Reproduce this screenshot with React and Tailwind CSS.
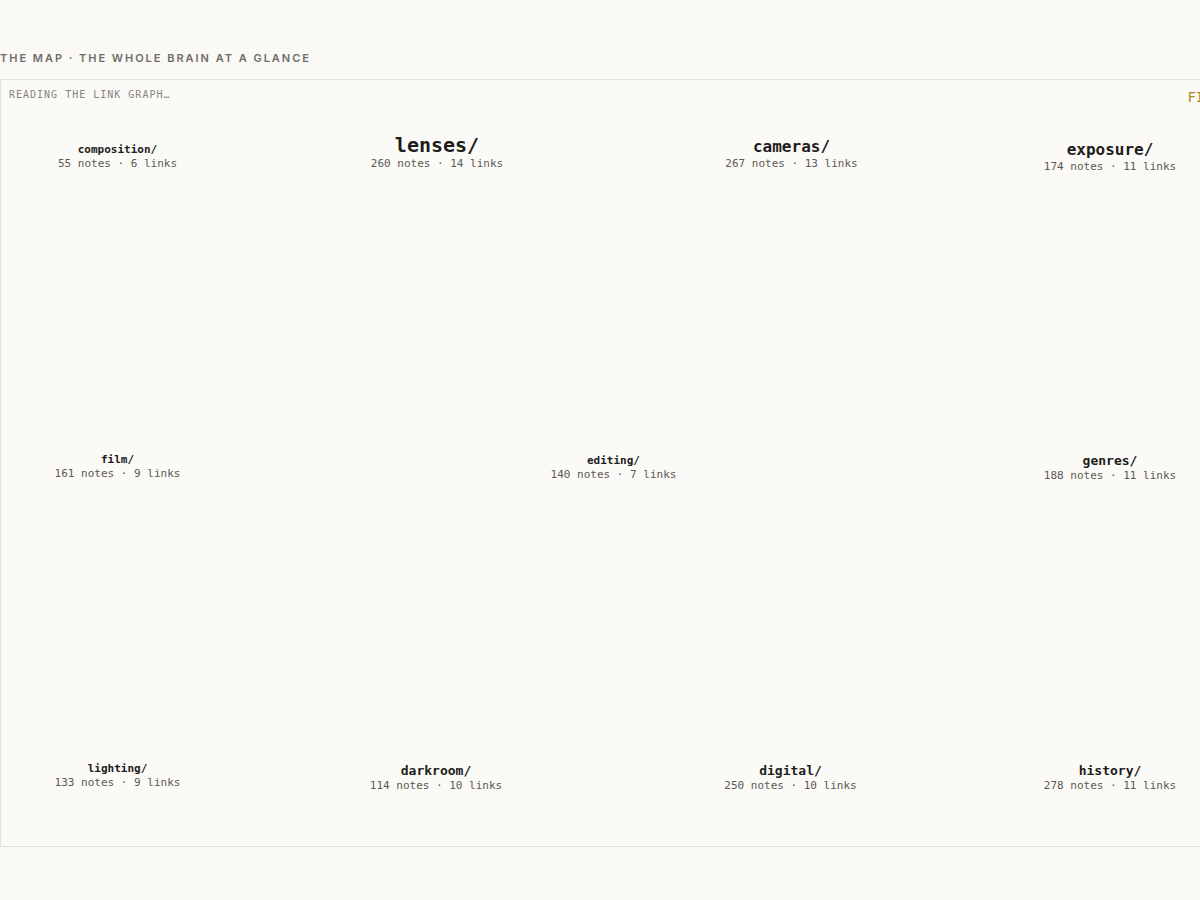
import React from "react";

const nodes = [
  { name: "composition/", meta: "55 notes · 6 links", cx: 117.5, bottom: 171, size: 11 },
  { name: "lenses/", meta: "260 notes · 14 links", cx: 437, bottom: 171, size: 20 },
  { name: "cameras/", meta: "267 notes · 13 links", cx: 791.5, bottom: 171, size: 16 },
  { name: "exposure/", meta: "174 notes · 11 links", cx: 1110, bottom: 174, size: 16 },
  { name: "film/", meta: "161 notes · 9 links", cx: 117.5, bottom: 481, size: 11 },
  { name: "editing/", meta: "140 notes · 7 links", cx: 613.5, bottom: 482, size: 11 },
  { name: "genres/", meta: "188 notes · 11 links", cx: 1110, bottom: 483, size: 13 },
  { name: "lighting/", meta: "133 notes · 9 links", cx: 117.5, bottom: 790, size: 11 },
  { name: "darkroom/", meta: "114 notes · 10 links", cx: 436, bottom: 793, size: 13 },
  { name: "digital/", meta: "250 notes · 10 links", cx: 790.5, bottom: 793, size: 13 },
  { name: "history/", meta: "278 notes · 11 links", cx: 1110, bottom: 793, size: 13 },
];

export default function App() {
  return (
    <div className="w-[1200px] h-[900px] overflow-hidden bg-[#faf9f5] pt-[50px]">
      <div className="h-4 text-[11px] leading-4 font-semibold tracking-[0.18em] text-[#6e6d68] uppercase font-['Inter','Noto_Sans',sans-serif]">
        The Map · The whole brain at a glance
      </div>
      <div className="relative mt-[13px] w-[1260px] h-[768px] border border-[#e4e2db] bg-[#fbfaf7] font-['DejaVu_Sans_Mono','Liberation_Mono',monospace]">
        <div className="flex items-start pl-2 pt-2 pr-[21px]">
          <div className="flex-1 text-[10px] leading-[14px] tracking-[0.1em] text-[#85847f] uppercase">
            Reading the link graph…
          </div>
          <div className="pt-[1px] text-[14px] leading-4 text-[#ad8a2c] uppercase">
            Filter
          </div>
        </div>
        {nodes.map((n) => (
          <div
            key={n.name}
            className="absolute flex flex-col items-center -translate-x-1/2 -translate-y-full whitespace-nowrap"
            style={{ left: n.cx - 1, top: n.bottom - 80 }}
          >
            <div
              className="leading-none font-semibold text-[#1d1d1b] mb-[2px]"
              style={{ fontSize: n.size }}
            >
              {n.name}
            </div>
            <div className="text-[11px] leading-[14px] text-[#5a5953]">{n.meta}</div>
          </div>
        ))}
      </div>
    </div>
  );
}
